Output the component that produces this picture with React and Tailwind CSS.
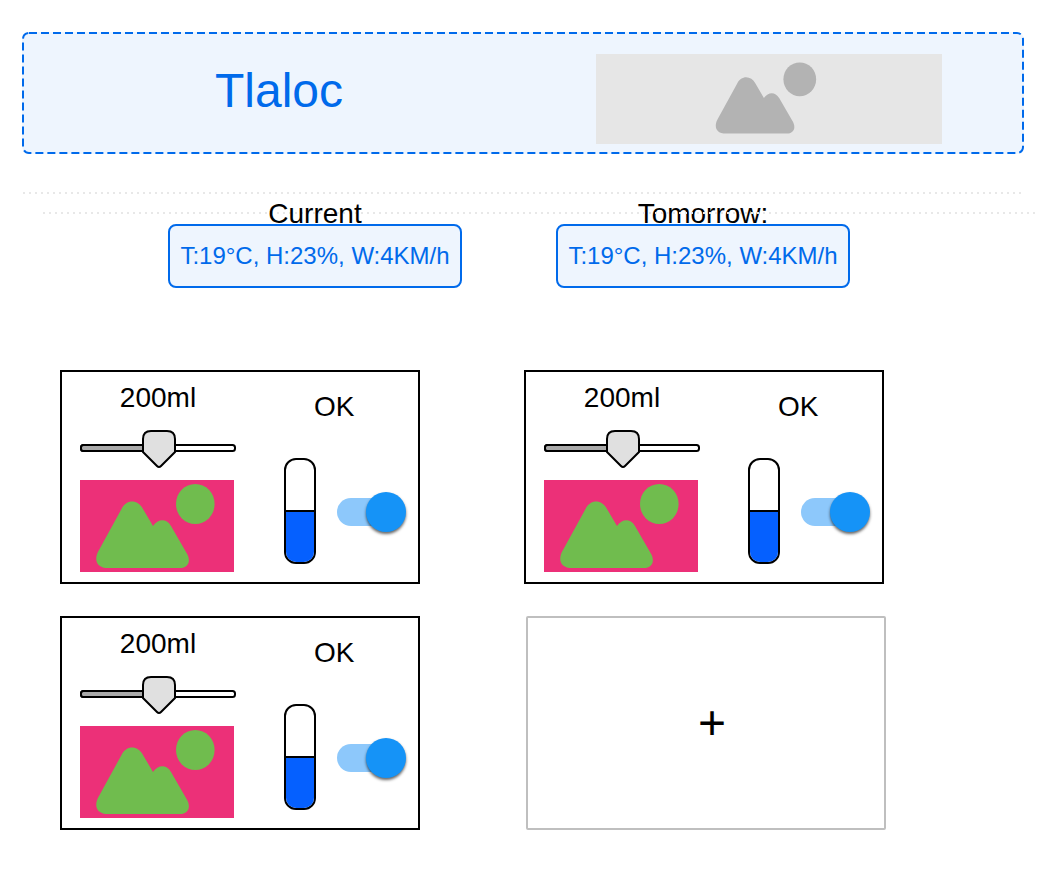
import { useId, useState } from "react";

function Landscape({ className, label, viewBox = "0 0 154 92" }) {
  return (
    <svg className={className} role="img" aria-label={label} viewBox={viewBox} fill="currentColor">
      <path d="M41.5 29 C46 19 58 19 63 29 L73 46 C78 39 86 38 91 46 L106 72 C112 81 108 88 100 88 L28 88 C17 88 13 80 19 70 Z" />
      <ellipse cx="115.3" cy="24" rx="19.3" ry="20" />
    </svg>
  );
}

function DottedLine({ className }) {
  return (
    <div
      aria-hidden="true"
      className={`h-[2px] bg-[repeating-linear-gradient(90deg,#e8e8e8_0px,#e8e8e8_2px,transparent_2px,transparent_6px)] ${className}`}
    />
  );
}

function Forecast({ title, className = "" }) {
  return (
    <section className={`flex w-[294px] flex-col items-center ${className}`}>
      <h2 className="h-6 text-[28px] leading-7">{title}</h2>
      <p className="flex h-16 w-full items-center justify-center whitespace-nowrap rounded-lg border-2 border-[#006aeb] bg-[#eef5fe] text-2xl text-[#006aeb]">
        T:19°C, H:23%, W:4KM/h
      </p>
    </section>
  );
}

function AmountSlider() {
  const [value, setValue] = useState(50);
  return (
    <div className="relative h-[38px] w-[156px]">
      <svg className="block" width="156" height="38" aria-hidden="true" stroke="#000" strokeWidth="2">
        <rect x="1" y="15" width="154" height="6" rx="2.5" fill="#fff" />
        <rect x="1" y="15" width={17 + value * 1.22} height="6" rx="2.5" fill="#aaa" />
        <path
          transform={`translate(${value * 1.22} 0)`}
          d="M10 1 H26 Q34 1 34 9 V22 L20 36 Q18 38 16 36 L2 22 V9 Q2 1 10 1 Z"
          fill="#e0e0e0"
        />
      </svg>
      <input
        type="range"
        aria-label="Water amount"
        value={value}
        onChange={(e) => setValue(Number(e.target.value))}
        className="absolute inset-0 h-full w-full cursor-pointer opacity-0"
      />
    </div>
  );
}

function Tank() {
  return (
    <div role="img" aria-label="Tank level 50%" className="flex h-[106px] w-8 flex-col justify-end overflow-hidden rounded-xl border-2 border-black bg-white">
      <div className="h-[52px] border-t-2 border-black bg-[#0560ff]" />
    </div>
  );
}

function Toggle() {
  const id = useId();
  return (
    <label htmlFor={id} className="relative mt-[2px] flex h-10 w-[70px] cursor-pointer items-center">
      <input id={id} type="checkbox" role="switch" aria-label="Watering" defaultChecked className="peer sr-only" />
      <span className="h-7 w-14 rounded-full bg-gray-300 peer-checked:bg-[#8dc8fb]" />
      <span className="absolute left-0 top-0 size-10 rounded-full bg-gray-100 shadow-[0_2px_3px_rgba(0,0,0,0.6)] peer-checked:left-[29px] peer-checked:bg-[#1593f7]" />
    </label>
  );
}

function PlantCard() {
  return (
    <article className="flex h-[214px] w-[360px] justify-between border-2 border-black bg-white pl-[18px] pr-[11px]">
      <div className="flex w-[156px] flex-col pt-[10px]">
        <h3 className="text-center text-[28px] leading-8">200ml</h3>
        <div className="mt-4">
          <AmountSlider />
        </div>
        <Landscape label="Plant" className="mt-3 h-[92px] w-[154px] bg-[#ec3078] text-[#70bc4e]" />
      </div>
      <div className="flex w-[123px] flex-col pt-[19px]">
        <p className="pl-[30px] text-[28px] leading-8">OK</p>
        <div className="mt-[35px] flex items-center justify-between">
          <Tank />
          <Toggle />
        </div>
      </div>
    </article>
  );
}

export default function App() {
  return (
    <main className="bg-white pb-11 pt-8 font-['Liberation_Sans',Arial,sans-serif] text-black">
      <header className="relative ml-[22px] mr-[14px] flex h-[122px] items-center rounded-lg bg-[#eef5fe] pl-[2px] pr-[82px]">
        <svg className="absolute inset-0 h-full w-full" aria-hidden="true">
          <rect x="1" y="1" rx="6" fill="none" stroke="#006aeb" strokeWidth="2" strokeDasharray="8 4" className="h-[calc(100%-2px)] w-[calc(100%-2px)]" />
        </svg>
        <h1 className="flex-1 pb-1 pr-[62px] text-center text-5xl text-[#006aeb]">Tlaloc</h1>
        <div className="mt-3 flex h-[90px] w-[346px] justify-center bg-[#e6e6e6] pt-[5px]">
          <Landscape label="Header image" viewBox="0 0 158 92" className="h-[78px] w-[134px] text-[#b3b3b3]" />
        </div>
      </header>

      <DottedLine className="ml-[23px] mr-4 mt-[38px]" />

      <div className="relative mt-[6px] flex gap-[94px] pl-[168px]">
        <Forecast title="Current" className="relative z-10" />
        <Forecast title="Tomorrow:" />
        <DottedLine className="absolute left-[43px] right-0 top-3" />
      </div>

      <div className="mt-[82px] grid grid-cols-[360px_360px] gap-x-[104px] gap-y-8 pl-[60px]">
        <PlantCard />
        <PlantCard />
        <PlantCard />
        <button type="button" aria-label="Add plant" className="ml-[2px] flex h-[214px] w-[360px] items-center justify-center rounded-xs border-2 border-[#bfbfbf] bg-white pl-3 text-5xl">
          +
        </button>
      </div>
    </main>
  );
}
